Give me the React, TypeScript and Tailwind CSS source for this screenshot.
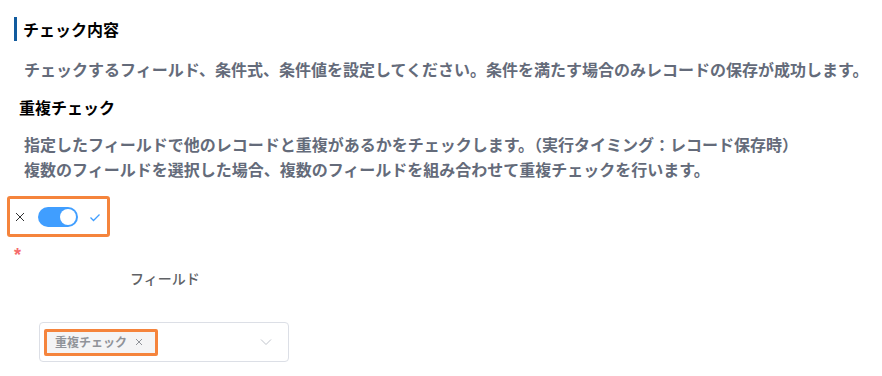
import React from "react";

const font = { fontFamily: '"Noto Sans CJK JP", "Noto Sans", sans-serif' };

export default function App() {
  return (
    <div
      className="w-[882px] h-[376px] bg-white overflow-hidden pt-[17px] font-['Noto_Sans_CJK_JP','Noto_Sans',sans-serif]"
      style={font}
    >
      <div className="ml-[14px] border-l-[3px] border-[#115b9e] pl-[6px] h-[24px] leading-[24px] text-[16px] font-bold text-black whitespace-nowrap">
        チェック内容
      </div>
      <p className="mt-[16px] ml-[24px] text-[16px] leading-[24px] font-bold text-[#646b7a] whitespace-nowrap">
        チェックするフィールド、条件式、条件値を設定してください。条件を満たす場合のみレコードの保存が成功します。
      </p>
      <div className="mt-[14px] ml-[19px] h-[24px] leading-[24px] text-[16px] font-bold text-black whitespace-nowrap">
        重複チェック
      </div>
      <div className="mt-[13px] ml-[24px] text-[16px] leading-[25px] font-bold text-[#646b7a] whitespace-nowrap">
        <p>指定したフィールドで他のレコードと重複があるかをチェックします。（実行タイミング：レコード保存時）</p>
        <p>複数のフィールドを選択した場合、複数のフィールドを組み合わせて重複チェックを行います。</p>
      </div>

      <div className="mt-[14px] ml-[7px] w-[103px] h-[41px] border-[3px] border-[#f5843c] rounded-[3px] flex items-center">
        <svg className="ml-[4px] w-[12px] h-[12px]" viewBox="0 0 12 12" fill="none" stroke="#303133" strokeWidth="1">
          <path d="M2 2 L10 10 M10 2 L2 10" />
        </svg>
        <div className="ml-[12px] w-[40px] h-[20px] rounded-full bg-[#409eff] flex items-center justify-end pr-[2px]">
          <div className="w-[16px] h-[16px] rounded-full bg-white" />
        </div>
        <svg className="ml-[11px] w-[12px] h-[12px]" viewBox="0 0 12 12" fill="none" stroke="#409eff" strokeWidth="1.3">
          <path d="M1.5 6.5 L4.5 9.5 L10.5 3.5" />
        </svg>
      </div>

      <div className="mt-[10px] ml-[14px] h-[16px] leading-[16px] text-[18px] font-bold text-[#f56c6c] font-['Liberation_Sans',sans-serif]">
        *
      </div>

      <div className="mt-[5px] ml-[130px] h-[20px] leading-[20px] text-[14px] font-medium text-[#606266] whitespace-nowrap">
        フィールド
      </div>

      <div className="mt-[34px] ml-[39px] w-[250px] h-[40px] border border-[#dcdfe6] rounded-[4px] flex items-center pl-[4px] pr-[16px]">
        <div className="border-[3px] border-[#f5843c] rounded-[2px] h-[27px] w-[114px] flex">
          <div className="flex-1 bg-[#f4f4f5] flex items-center pl-[8px] text-[12px] leading-[16px] font-bold text-[#909399] whitespace-nowrap">
            重複チェック
            <svg className="ml-[8px] w-[8px] h-[8px]" viewBox="0 0 8 8" fill="none" stroke="#909399" strokeWidth="1">
              <path d="M1 1 L7 7 M7 1 L1 7" />
            </svg>
          </div>
        </div>
        <div className="flex-1" />
        <svg className="w-[12px] h-[8px]" viewBox="0 0 12 8" fill="none" stroke="#c0c4cc" strokeWidth="1">
          <path d="M1 1.5 L6 6.5 L11 1.5" />
        </svg>
      </div>
    </div>
  );
}
